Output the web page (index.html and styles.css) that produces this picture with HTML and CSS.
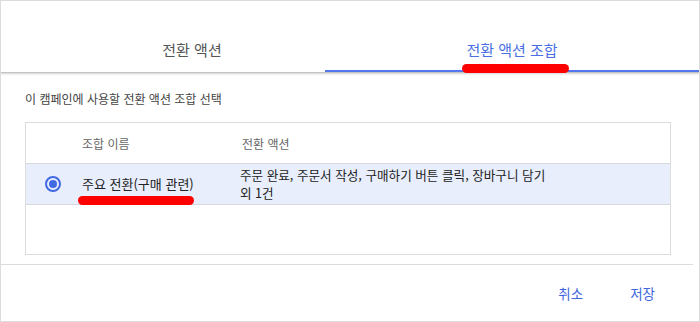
FILE: index.html
```html
<!DOCTYPE html>
<html lang="ko">
<head>
<meta charset="utf-8">
<link rel="stylesheet" href="styles.css">
</head>
<body>
<div class="dialog">
  <div class="tabs">
    <div class="tab first">전환 액션</div>
    <div class="tab active">전환 액션 조합<span class="mark mark-tab"></span></div>
  </div>
  <div class="content">
    <p class="subtitle">이 캠페인에 사용할 전환 액션 조합 선택</p>
    <div class="table">
      <div class="row head">
        <div class="cell"></div>
        <div class="cell">조합 이름</div>
        <div class="cell">전환 액션</div>
      </div>
      <div class="row selected">
        <div class="cell radio-cell"><span class="radio"></span></div>
        <div class="cell name">주요 전환(구매 관련)<span class="mark mark-name"></span></div>
        <div class="cell actions"><span class="line">주문 완료, 주문서 작성, 구매하기 버튼 클릭, 장바구니 담기</span><span class="line">외 1건</span></div>
      </div>
      <div class="row empty"></div>
    </div>
  </div>
  <div class="footer">
    <button class="btn">취소</button>
    <button class="btn">저장</button>
  </div>
</div>
</body>
</html>
```
FILE: styles.css
```css
* { box-sizing: border-box; }
html, body { margin: 0; padding: 0; background: #fff; }
body {
  font-family: "Noto Sans CJK KR", "Noto Sans", sans-serif;
  color: #222;
}
.dialog {
  width: 700px;
  height: 322px;
  border: 1px solid #dcdcdc;
  display: flex;
  flex-direction: column;
  overflow: hidden;
}
.tabs {
  display: flex;
  border-bottom: 1px solid #c4c4c4;
  box-shadow: 0 1px 2px rgba(0,0,0,0.18);
  position: relative;
  z-index: 1;
}
.tab {
  position: relative;
  width: 324px;
  padding-top: 39px;
  padding-bottom: 10px;
  line-height: 20px;
  font-size: 15px;
  color: #555;
  text-align: center;
  border-bottom: 2px solid transparent;
}
.tab.first { padding-left: 58px; }
.tab.active {
  flex: 1;
  width: auto;
  color: #4a6fe3;
  border-bottom-color: #5577ee;
}
.mark {
  position: absolute;
  background: #ff0000;
  border-radius: 5px;
}
.mark-tab {
  left: 137px;
  width: 107px;
  top: 63px;
  height: 9px;
}
.content {
  padding: 0 0 0 24px;
  flex: 1;
}
.subtitle {
  margin: 0;
  padding-top: 16px;
  height: 49px;
  line-height: 20px;
  font-size: 12px;
  color: #444;
}
.table {
  width: 646px;
  border: 1px solid #dcdcdc;
}
.row {
  display: grid;
  grid-template-columns: 56px 158px 1fr;
  align-items: center;
}
.row.head {
  height: 40px;
  font-size: 12px;
  color: #666;
}
.row.head .cell:nth-child(3) { padding-left: 2px; }
.row.selected {
  height: 42px;
  background: #e8eefc;
  border-top: 1px solid #d6d9e0;
  border-bottom: 1px solid #d6d9e0;
  font-size: 13px;
  color: #222;
}
.row.empty { height: 49px; }
.radio-cell { display: flex; justify-content: flex-start; padding-left: 19px; }
.radio {
  width: 16px;
  height: 16px;
  border-radius: 50%;
  border: 2px solid #4169e1;
  display: flex;
  align-items: center;
  justify-content: center;
}
.radio::after {
  content: "";
  width: 8px;
  height: 8px;
  border-radius: 50%;
  background: #4169e1;
}
.name { position: relative; line-height: 20px; }
.mark-name {
  left: -4px;
  width: 116px;
  top: 22px;
  height: 9px;
}
.actions { line-height: 18px; font-size: 12.6px; }
.actions .line { display: block; }
.footer {
  margin-right: 6px;
  border-top: 1px solid #dcdcdc;
  height: 57px;
  display: flex;
  justify-content: flex-end;
  align-items: center;
  gap: 31px;
  padding-right: 30px;
  margin-top: auto;
}
.btn {
  background: none;
  border: none;
  padding: 4px 8px;
  font-family: inherit;
  font-size: 13.5px;
  color: #3f66dd;
}
```
